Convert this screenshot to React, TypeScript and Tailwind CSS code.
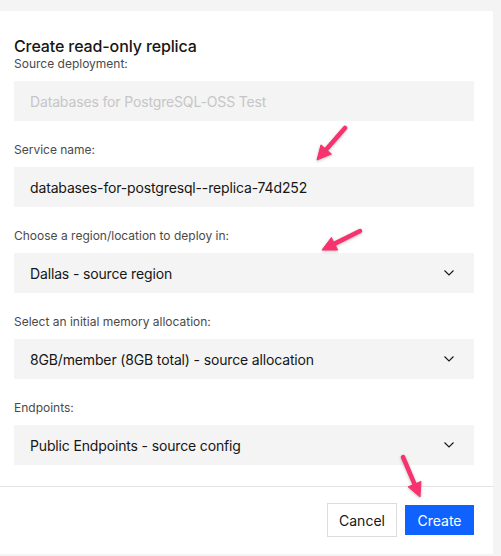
import React from 'react';

const font = { fontFamily: 'Inter, "Noto Sans", Arial, sans-serif' };

type Pt = [number, number];

// Callout arrows drawn over the dialog (screenshot annotations)
const arrows: { tail: Pt; tip: Pt }[] = [
  { tail: [345, 128], tip: [317, 160] },
  { tail: [360, 231], tip: [322, 250] },
  { tail: [403, 457], tip: [420, 497] },
];

function Arrow({ tail, tip }: { tail: Pt; tip: Pt }) {
  const dx = tip[0] - tail[0];
  const dy = tip[1] - tail[1];
  const len = Math.hypot(dx, dy);
  const ux = dx / len;
  const uy = dy / len;
  const headLen = 14;
  const half = 7;
  const bx = tip[0] - ux * headLen;
  const by = tip[1] - uy * headLen;
  const p1 = `${bx - uy * half},${by + ux * half}`;
  const p2 = `${bx + uy * half},${by - ux * half}`;
  return (
    <g>
      <line x1={tail[0]} y1={tail[1]} x2={bx + ux * 2} y2={by + uy * 2} stroke="#f7336f" strokeWidth={4.5} strokeLinecap="round" />
      <polygon points={`${tip[0]},${tip[1]} ${p1} ${p2}`} fill="#f7336f" strokeLinejoin="round" stroke="#f7336f" strokeWidth={1} />
    </g>
  );
}

function Chevron() {
  return (
    <svg width="12" height="8" viewBox="0 0 12 8" fill="none">
      <path d="M1.5 1.5 L6 6 L10.5 1.5" stroke="#161616" strokeWidth="1.1" />
    </svg>
  );
}

function Field({ label, value, disabled, select, first }: { label: string; value: string; disabled?: boolean; select?: boolean; first?: boolean }) {
  return (
    <div className={first ? '' : 'mt-[21px]'}>
      <div className="text-[12px] leading-4 text-[#4a4a4a] mb-[9px]">{label}</div>
      <div className="h-10 bg-[#f4f4f4] flex items-center justify-between pl-4 pr-[19px]">
        <span className={`text-[14px] tracking-[-0.15px] ${disabled ? 'text-[#c6c6c6]' : 'text-[#161616]'}`}>{value}</span>
        {select && <Chevron />}
      </div>
    </div>
  );
}

export default function App() {
  return (
    <div className="relative w-[501px] h-[556px] bg-[#f4f4f4] overflow-hidden" style={font}>
      <div className="mt-[11px] w-[493px] h-[543px] bg-white flex flex-col">
        <div className="pl-[14px] pr-[19px] pt-[25px]">
          <h2 className="text-[16px] leading-5 font-medium tracking-[-0.12px] text-[#161616]">Create read-only replica</h2>
          <Field first label="Source deployment:" value="Databases for PostgreSQL-OSS Test" disabled />
          <Field label="Service name:" value="databases-for-postgresql--replica-74d252" />
          <Field label="Choose a region/location to deploy in:" value="Dallas - source region" select />
          <Field label="Select an initial memory allocation:" value="8GB/member (8GB total) - source allocation" select />
          <Field label="Endpoints:" value="Public Endpoints - source config" select />
        </div>
        <div className="mt-[21px] h-px bg-[#e4e4e4]" />
        <div className="flex justify-end items-center gap-2 pr-[19px] pt-[16px]">
          <button className="h-[34px] w-[70px] border border-[#dcdcdc] bg-white text-[14px] text-[#161616]">Cancel</button>
          <button className="h-[30px] w-[69px] bg-[#0f62fe] text-[14px] text-white">Create</button>
        </div>
      </div>
      <svg className="absolute inset-0 pointer-events-none" width="501" height="556" style={{ filter: 'drop-shadow(0 1px 1.5px rgba(0,0,0,0.25))' }}>
        {arrows.map((a, i) => (
          <Arrow key={i} tail={a.tail} tip={a.tip} />
        ))}
      </svg>
    </div>
  );
}
